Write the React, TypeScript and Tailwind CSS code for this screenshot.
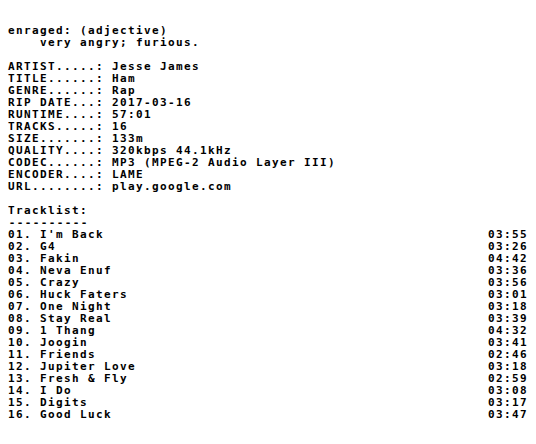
import React from "react";

const INFO: [string, string][] = [
  ["ARTIST.....", "Jesse James"],
  ["TITLE......", "Ham"],
  ["GENRE......", "Rap"],
  ["RIP DATE...", "2017-03-16"],
  ["RUNTIME....", "57:01"],
  ["TRACKS.....", "16"],
  ["SIZE.......", "133m"],
  ["QUALITY....", "320kbps 44.1kHz"],
  ["CODEC......", "MP3 (MPEG-2 Audio Layer III)"],
  ["ENCODER....", "LAME"],
  ["URL........", "play.google.com"],
];

const TRACKS: [string, string][] = [
  ["I'm Back", "03:55"],
  ["G4", "03:26"],
  ["Fakin", "04:42"],
  ["Neva Enuf", "03:36"],
  ["Crazy", "03:56"],
  ["Huck Faters", "03:01"],
  ["One Night", "03:18"],
  ["Stay Real", "03:39"],
  ["1 Thang", "04:32"],
  ["Joogin", "03:41"],
  ["Friends", "02:46"],
  ["Jupiter Love", "03:18"],
  ["Fresh & Fly", "02:59"],
  ["I Do", "03:08"],
  ["Digits", "03:17"],
  ["Good Luck", "03:47"],
];

export default function App() {
  return (
    <div className="w-[536px] h-[444px] bg-white text-black overflow-hidden pl-2 pr-[8px] pt-[25px] font-['DejaVu_Sans_Mono',monospace] text-[11px] leading-[12px] font-bold tracking-[1.38px] whitespace-pre">
      {/* definition */}
      <div>enraged: (adjective)</div>
      <div>{"    very angry; furious."}</div>
      <div className="h-3" />

      {/* release info */}
      {INFO.map(([k, v]) => (
        <div key={k}>
          {k}: {v}
        </div>
      ))}
      <div className="h-3" />

      {/* tracklist */}
      <div>Tracklist:</div>
      <div className="tracking-[0px]">
        {"----------".split("").map((c, i) => (
          <span key={i} className="inline-block w-[8px] text-center">
            {c}
          </span>
        ))}
      </div>
      {TRACKS.map(([name, time], i) => (
        <div key={i} className="flex justify-between">
          <span>
            {String(i + 1).padStart(2, "0")}. {name}
          </span>
          <span>{time}</span>
        </div>
      ))}
    </div>
  );
}
